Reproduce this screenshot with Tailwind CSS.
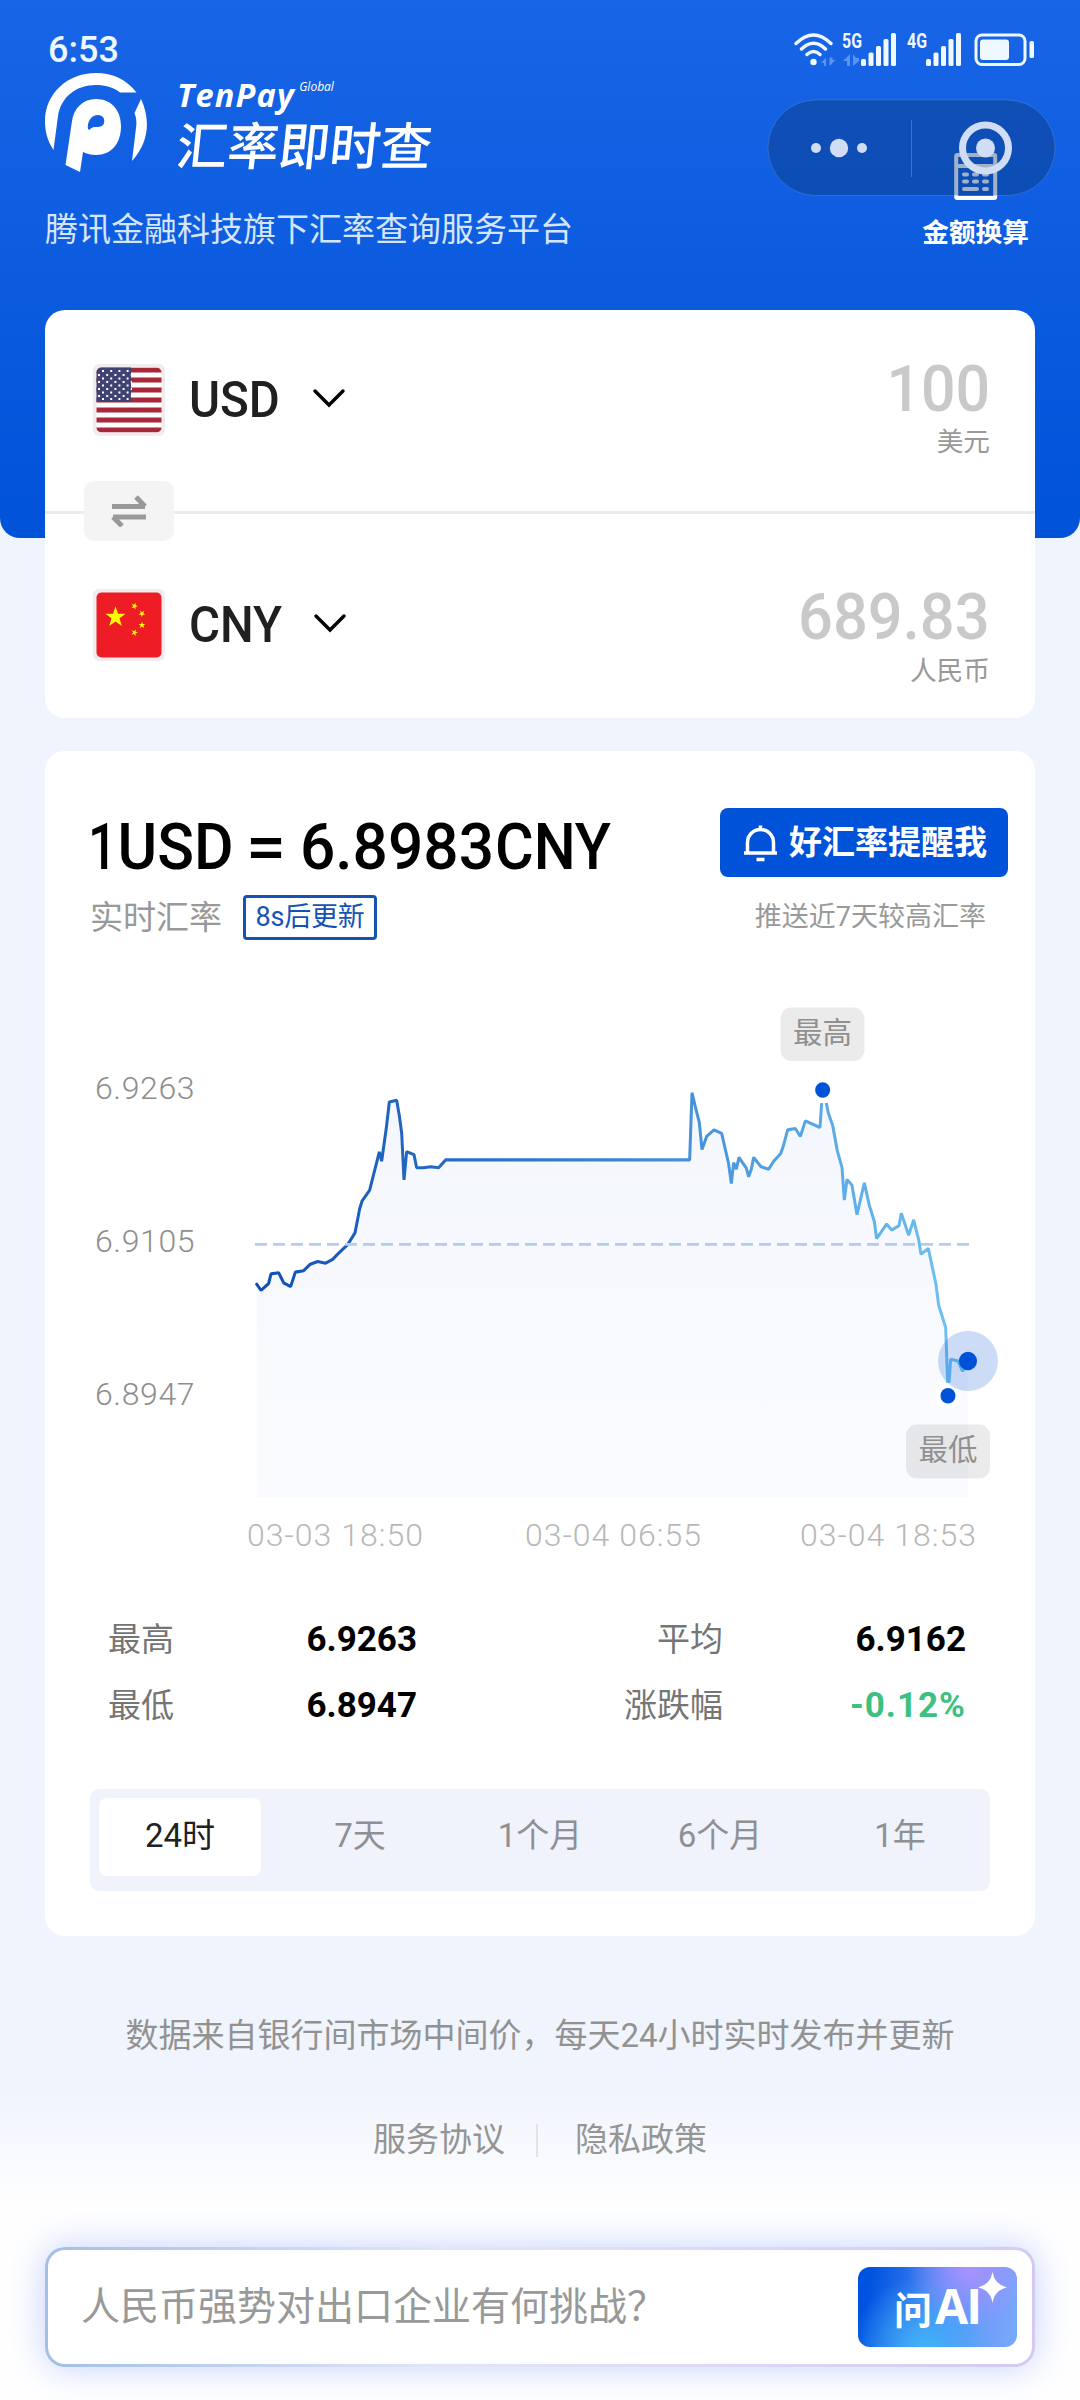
<!DOCTYPE html>
<html lang="zh-CN">

<head>
  <meta charset="UTF-8">
  <meta name="viewport" content="width=device-width, initial-scale=1.0">
  <title>汇率即时查</title>
  <script src="https://cdn.jsdelivr.net/npm/@tailwindcss/browser@4"></script>
</head>

<body class="bg-[#f0f4fc] font-['Roboto','Noto_Sans_CJK_SC',sans-serif] text-black">
  <div class="relative w-[1080px] h-[2400px] overflow-hidden">

    <header class="relative h-[538px] rounded-b-[20px] bg-linear-to-b from-[#1865e6] to-[#0052d9] text-white">
      <!-- status bar -->
      <div class="flex justify-between h-[70px] pt-[33px] pl-[48px] pr-[43px] text-[#eff7ff]">
        <span class="text-[36px] leading-[34px] font-medium">6:53</span>
        <div class="flex">
          <svg class="w-[46px] h-[34px]" viewBox="0 0 46 34" fill="none" stroke="currentColor" stroke-width="3.4" stroke-linecap="round">
            <path d="M3 10.500Q20.500-6.500 38 10.500M8.500 16Q20.500 4.500 32.500 16M14 21.500Q20.500 15.500 27 21.500" />
            <circle cx="20.500" cy="29" r="3.200" fill="currentColor" stroke="none" />
            <path d="M33 24.500v8.500h-2v-3h-3zM36.500 24.500v8.500l6-6h-3v-2.500z" fill="#5b93f0" stroke="none" />
          </svg>
          <svg class="w-[66px] h-[34px] overflow-visible" viewBox="0 0 66 34" fill="currentColor">
            <text x="3" y="15" font-size="21" font-weight="700" textLength="20" lengthAdjust="spacingAndGlyphs">5G</text>
            <path d="M11 21v12h-3v-5h-4zM14 21v12l6-5v-3h-3z" fill="#5b93f0" />
            <rect x="22" y="26" width="5" height="7" rx="1.500" />
            <rect x="29.500" y="19.500" width="5" height="13.500" rx="1.500" />
            <rect x="37" y="13" width="5" height="20" rx="1.500" />
            <rect x="44.500" y="6" width="5" height="27" rx="1.500" />
            <rect x="52" y="0" width="5" height="33" rx="1.500" />
          </svg>
          <svg class="w-[66px] h-[34px] overflow-visible" viewBox="0 0 66 34" fill="currentColor">
            <text x="2" y="15" font-size="21" font-weight="700" textLength="20" lengthAdjust="spacingAndGlyphs">4G</text>
            <rect x="21" y="26" width="5" height="7" rx="1.500" />
            <rect x="28.500" y="19.500" width="5" height="13.500" rx="1.500" />
            <rect x="36" y="13" width="5" height="20" rx="1.500" />
            <rect x="43.500" y="6" width="5" height="27" rx="1.500" />
            <rect x="51" y="0" width="5" height="33" rx="1.500" />
          </svg>
          <svg class="w-[66px] h-[34px]" viewBox="0 0 66 34" fill="currentColor">
            <rect x="5" y="2" width="49" height="29.500" rx="6" fill="none" stroke="currentColor" stroke-width="3" />
            <rect x="9" y="6.500" width="29" height="20.500" rx="3" />
            <rect x="58.500" y="8" width="4.500" height="17" rx="1.500" />
          </svg>
        </div>
      </div>

      <!-- brand -->
      <div class="flex pl-[45px] pt-[3px]">
        <svg class="w-[104px] h-[100px]" viewBox="0 0 104 100" fill="#fff">
          <path d="M8.500 77C2 67 0 58 0 48C0 21 22 0 51 0C68 0 82 7 91.500 19.500H75C68 14 60 12 51 12C31 12 16 24 13 43Z" />
          <path d="M96 26C105 45 105 68 87 88L91 55C92 48 91 44 89.500 40Z" />
          <path fill-rule="evenodd" d="M20.500 92L27 48C29 35 38 26 51 26C66 26 76 37 76 53C76 71 66 82 51 82C46 82 42 81 38 79L35 99ZM43 56C42 49 46 42 53 42C58 42 60 46 59 50C58 54 54 54 50 54C47 54 45 56 44.500 57Z" />
        </svg>
        <div class="pl-[28px] pt-[2px]">
          <div class="flex items-start font-['Open_Sans',sans-serif] italic">
            <span class="text-[32.5px] leading-[40px] font-bold tracking-[1.2px]">TenPay</span>
            <span class="pl-[4px] pt-[4px] text-[12px] leading-[16px]">Global</span>
          </div>
          <div class="-skew-x-6 pt-[4px] text-[51px] leading-[58px] font-medium">汇率即时查</div>
        </div>
      </div>
      <p class="pl-[45px] pt-[31px] text-[33px] leading-[44px] text-[#d5e5fd]">腾讯金融科技旗下汇率查询服务平台</p>

      <!-- amount converter entry -->
      <div class="absolute right-[51px] top-[152px] flex flex-col items-center">
        <svg class="w-[44px] h-[49px]" viewBox="0 0 44 49" fill="none" stroke="#fff" stroke-width="4">
          <rect x="2.200" y="3" width="39" height="43" rx="1" />
          <path d="M2 14h39" />
          <path d="M10 22.500h3M20 22.500h3M30 22.500h3M10 29.500h3M20 29.500h3M30 29.500h3M10 37h13M30 37h3" stroke-linecap="round" />
        </svg>
        <span class="mt-[14px] text-[26.7px] leading-[36px] font-bold">金额换算</span>
      </div>

      <!-- mini program capsule -->
      <svg class="absolute left-[767px] top-[99px] w-[289px] h-[98px]" viewBox="0 0 289 98">
        <rect x="1" y="1" width="287" height="95.500" rx="47.700" fill="#09326f" fill-opacity=".38" stroke="#fff" stroke-opacity=".14" />
        <path d="M144.500 21v57" stroke="#fff" stroke-opacity=".2" />
        <g fill="#d0ddf5">
          <circle cx="49" cy="49" r="5" />
          <circle cx="72" cy="49" r="9.200" />
          <circle cx="95" cy="49" r="5" />
          <circle cx="218.500" cy="49" r="9.500" />
        </g>
        <circle cx="218.500" cy="49" r="23" fill="none" stroke="#d0ddf5" stroke-width="7" />
      </svg>
    </header>

    <main class="relative -mt-[228px] px-[45px]">
      <!-- converter -->
      <section class="relative h-[408px] rounded-[20px] bg-white">
        <div class="flex justify-between h-[201px] pl-[48px] pr-[45px]">
          <div class="flex items-center h-[126px] pt-[27px]">
            <svg class="w-[72px] h-[72px] mt-[27px]" viewBox="0 0 72 72">
              <rect width="72" height="72" rx="6" fill="#f1ecee" />
              <clipPath id="flag">
                <rect x="3.500" y="3.500" width="65" height="65" rx="5" />
              </clipPath>
              <g clip-path="url(#flag)">
                <rect width="72" height="72" fill="#fff" />
                <path d="M0 6h72M0 16h72M0 26h72M0 36h72M0 46h72M0 56h72M0 66h72" stroke="#a72839" stroke-width="5" />
                <rect width="38" height="38" fill="#3f4272" />
                <path d="M9 7h30M5 11h34M9 14.500h30M5 18h34M9 21.500h30M5 25h34M9 28.500h30M5 32h34M9 35h30" stroke="#fff" stroke-width="2" stroke-dasharray="2 6.200" />
              </g>
            </svg>
            <span class="w-[88px] ml-[24px] mt-[27px] text-[50px] font-medium origin-left scale-x-[0.95] text-[#202020]">USD</span>
            <svg class="w-[34px] h-[22px] ml-[35px] mt-[22px]" viewBox="0 0 34 22" fill="none" stroke="#000" stroke-width="3.400" stroke-linecap="round">
              <path d="M3 4l14 14L31 4" />
            </svg>
          </div>
          <div class="pt-[45px] text-right">
            <div class="text-[64px] leading-[70px] font-medium origin-right scale-x-95 text-[#c9c9c9]">100</div>
            <div class="-mt-[3px] text-[26.7px] leading-[40px] text-[#999]">美元</div>
          </div>
        </div>
        <div class="h-[3px] bg-[#ebebeb]"></div>
        <div class="flex justify-between h-[204px] pl-[48px] pr-[45px]">
          <div class="flex items-center h-[174px] pt-[24px]">
            <svg class="w-[72px] h-[72px] mt-[24px]" viewBox="0 0 72 72">
              <rect width="72" height="72" rx="6" fill="#f1ecee" />
              <rect x="3.500" y="3.500" width="65" height="65" rx="5" fill="#ee1c25" />
              <g fill="#ff0">
                <path id="star" d="M22.500 17.500L25 24.800H32.700L26.500 29.300L28.800 37L22.500 32.500L16.200 37L18.500 29.300L12.300 24.800H20Z" />
                <use href="#star" transform="translate(41.500 17) rotate(20) scale(.33) translate(-22.500 -28)" />
                <use href="#star" transform="translate(49 24.500) rotate(40) scale(.33) translate(-22.500 -28)" />
                <use href="#star" transform="translate(49 36) scale(.33) translate(-22.500 -28)" />
                <use href="#star" transform="translate(41.500 43.500) rotate(20) scale(.33) translate(-22.500 -28)" />
              </g>
            </svg>
            <span class="w-[90px] ml-[24px] mt-[24px] text-[50px] font-medium origin-left scale-x-[0.95] text-[#202020]">CNY</span>
            <svg class="w-[34px] h-[22px] ml-[34px] mt-[19px]" viewBox="0 0 34 22" fill="none" stroke="#000" stroke-width="3.400" stroke-linecap="round">
              <path d="M3 4l14 14L31 4" />
            </svg>
          </div>
          <div class="pt-[69px] text-right">
            <div class="text-[64px] leading-[70px] font-medium origin-right scale-x-[0.96] text-[#c9c9c9]">689.83</div>
            <div class="-mt-[2px] text-[26.7px] leading-[40px] text-[#999]">人民币</div>
          </div>
        </div>
        <button class="absolute left-[39px] top-[171px] w-[90px] h-[60px] rounded-[10px] bg-[#f4f4f4]">
          <svg class="w-[36px] h-[32px] mx-auto" viewBox="0 0 36 32" fill="none" stroke="#999" stroke-width="5">
            <path d="M1 11.500H34M25 2L34 11.500M35 22H2M11 31L2 22" />
          </svg>
        </button>
      </section>

      <!-- rate details -->
      <section class="mt-[33px] h-[1185px] rounded-[20px] bg-white px-[45px] pt-[57px]">
        <div class="flex justify-between h-[132px]">
          <div>
            <h1>
              <svg class="w-[530px] h-[78px] overflow-visible" viewBox="0 0 530 78" font-size="64.500" font-weight="500">
                <text x="-2" y="61" textLength="29" lengthAdjust="spacingAndGlyphs">1</text>
                <text x="27.500" y="61" textLength="116" lengthAdjust="spacingAndGlyphs">USD</text>
                <text x="156" y="61" textLength="40" lengthAdjust="spacingAndGlyphs">=</text>
                <text x="210" y="61" textLength="194" lengthAdjust="spacingAndGlyphs">6.8983</text>
                <text x="405" y="61" textLength="116" lengthAdjust="spacingAndGlyphs">CNY</text>
              </svg>
            </h1>
            <div class="flex items-center mt-[9px] text-[33px] leading-[45px] text-[#999]">
              <span>实时汇率</span>
              <span class="w-[134px] h-[45px] ml-[21px] border-3 border-[#1453b4] rounded-[4px] text-center text-[27px] leading-[39px] tracking-[-0.2px] text-[#1453b4]">8s后更新</span>
            </div>
          </div>
          <div class="-mr-[18px]">
            <button class="flex items-center w-[288px] h-[69px] pl-[23px] rounded-[8px] bg-[#0052d9] text-white">
              <svg class="w-[36px] h-[40px]" viewBox="0 0 36 40" fill="none" stroke="#fff" stroke-width="3.500">
                <path d="M1 30H34M4.500 30V19.500A13 13 0 0 1 30.500 19.500V30M17.500 2.500V7M13.500 36.500H21.500" />
              </svg>
              <span class="pl-[10px] text-[33px] leading-[44px] font-bold">好汇率提醒我</span>
            </button>
            <p class="mt-[21px] pr-[22px] text-right text-[27px] leading-[38px] text-[#999]">推送近7天较高汇率</p>
          </div>
        </div>

        <svg class="-ml-[30px] mt-[60px] w-[960px] h-[560px]" viewBox="60 1000 960 560">
          <defs>
            <linearGradient id="line" gradientUnits="userSpaceOnUse" x1="588" y1="0" x2="2724" y2="0">
              <stop offset="0" stop-color="#0f4fb5" />
              <stop offset=".5" stop-color="#3a83d2" />
              <stop offset="1" stop-color="#70c4f2" />
            </linearGradient>
            <linearGradient id="area" x1="0" y1="0" x2="0" y2="1">
              <stop offset="0" stop-color="#f4f7fd" />
              <stop offset="1" stop-color="#fafbfe" />
            </linearGradient>
          </defs>
          <g transform="translate(60 1040) scale(.33333 .34439)">
            <path fill="url(#area)" d="M590 706L603 727L626 707L633 679L656 676L671 705L692 716L706 674L731 670L751 651L773 643L797 648L818 637L836 619L863 594L885 560L899 490L906 468L929 436L958 325L965 352L979 255L988 180L1010 175L1018 220L1025 270L1032 406L1040 324L1062 333L1070 371L1136 371L1157 348L1889 348L1896 153L1905 190L1918 240L1926 318L1940 280L1962 261L1985 271L2006 360L2014 417L2021 356L2029 375L2037 341L2059 372L2066 397L2074 375L2081 341L2103 368L2126 375L2141 352L2162 330L2170 308L2183 261L2206 257L2221 280L2236 235L2280 254L2288 145L2305 212L2318 248L2332 322L2346 370L2353 465L2361 405L2376 422L2391 507L2413 415L2428 480L2443 527L2450 577L2480 534L2495 552L2517 539L2524 503L2546 567L2561 522L2576 580L2583 622L2605 605L2628 710L2636 770L2657 835L2664 1033L2672 927L2694 932L2708 962L2723 932V1328H590Z" />
            <path fill="none" stroke="url(#line)" stroke-width="9" stroke-linejoin="bevel" d="M588 706L603 727L626 707L633 679L656 676L671 705L692 716L706 674L731 670L751 651L773 643L797 648L818 637L836 619L863 594L885 560L899 490L906 468L929 436L958 325L965 352L979 255L988 180L1010 175L1018 220L1025 270L1032 406L1040 324L1062 333L1070 371L1090 371L1112 368L1136 371L1157 348L1889 348L1896 153L1905 190L1918 240L1926 318L1940 280L1962 261L1985 271L2006 360L2014 417L2021 356L2029 375L2037 341L2059 372L2066 397L2074 375L2081 341L2103 368L2126 375L2141 352L2162 330L2170 308L2183 261L2206 257L2221 280L2236 235L2280 254L2285 183M2299 183L2305 212L2318 248L2332 322L2346 370L2353 465L2361 405L2376 422L2391 507L2413 415L2428 480L2443 527L2450 577L2480 534L2495 552L2517 539L2524 503L2546 567L2561 522L2576 580L2583 622L2605 605L2628 710L2636 770L2657 835L2663 994L2667 994L2672 927L2694 932L2708 962L2723 932" />
            <path d="M585 593.500H2728" stroke="#b3ccf2" stroke-width="8.500" stroke-dasharray="36 18" />
            <circle cx="2288" cy="145" r="38" fill="#fff" />
            <circle cx="2288" cy="145" r="22.500" fill="#0052d9" />
            <circle cx="2664" cy="1033" r="38" fill="#fff" />
            <circle cx="2664" cy="1033" r="22.500" fill="#0052d9" />
            <ellipse cx="2724" cy="932" rx="90" ry="87" fill="#0052d9" fill-opacity=".2" />
            <circle cx="2724" cy="932" r="27" fill="#0052d9" />
          </g>
          <rect x="780.500" y="1007.500" width="84" height="53.500" rx="11" fill="#000" fill-opacity=".08" />
          <rect x="906" y="1424.500" width="84" height="54" rx="11" fill="#000" fill-opacity=".08" />
          <g font-size="29.500" fill="#909090" text-anchor="middle">
            <text x="822.500" y="1042.500">最高</text>
            <text x="948" y="1460">最低</text>
          </g>
          <g font-size="32" fill="#8e8e8e" font-weight="300">
            <text x="95" y="1098.500" textLength="99.500">6.9263</text>
            <text x="95" y="1251.500" textLength="99.500">6.9105</text>
            <text x="95" y="1404.500" textLength="99.500">6.8947</text>
          </g>
          <g font-size="32" fill="#b8b8b8" font-weight="300">
            <text x="247" y="1545.500" textLength="176">03-03 18:50</text>
            <text x="525" y="1545.500" textLength="176">03-04 06:55</text>
            <text x="800" y="1545.500" textLength="176">03-04 18:53</text>
          </g>
        </svg>

        <div class="grid grid-cols-[179px_130px_306px_243px] pl-[18px] mt-[47px] text-[33px] leading-[66px] text-[#757575]">
          <span>最高</span>
          <span class="text-right text-[35px] font-bold text-black">6.9263</span>
          <span class="text-right">平均</span>
          <span class="text-right text-[35px] font-bold text-black">6.9162</span>
          <span>最低</span>
          <span class="text-right text-[35px] font-bold text-black">6.8947</span>
          <span class="text-right">涨跌幅</span>
          <span class="text-right text-[35px] font-bold tracking-[1px] text-[#3dc080]">-0.12%</span>
        </div>

        <div class="grid grid-cols-5 mt-[50px] h-[102px] rounded-[9px] bg-[#f0f3fb] text-center text-[33px] leading-[78px] text-[#8e9094]">
          <span class="w-[162px] h-[78px] mx-auto mt-[9px] rounded-[8px] bg-white leading-[76px] text-[#202020]">24时</span>
          <span class="pt-[8px]">7天</span>
          <span class="pt-[8px]">1个月</span>
          <span class="pt-[8px]">6个月</span>
          <span class="pt-[8px]">1年</span>
        </div>
      </section>
    </main>

    <footer class="h-[465px] pt-[78px] bg-linear-to-b from-[#f0f4fc] from-[33%] to-[#fefeff] to-[58%] text-center text-[33px] leading-[44px] text-[#929292]">
      <p>数据来自银行间市场中间价，每天24小时实时发布并更新</p>
      <div class="flex justify-center items-center mt-[60px] text-[#959595]">
        <a>服务协议</a>
        <span class="w-[2px] h-[33px] ml-[31px] mr-[37px] bg-[#e3e3e6]"></span>
        <a>隐私政策</a>
      </div>
      <div class="mx-[45px] mt-[85px] h-[120px] rounded-[20px] p-[3px] bg-linear-to-r from-[#a3bfe6] via-[#e2e6f8] via-40% to-[#d4c9f2] shadow-[0_0_36px_#c6d3fb]">
        <div class="flex items-center justify-between h-full rounded-[17px] bg-white pl-[33px] pr-[15px]">
          <span class="text-[39px] text-[#999]">人民币强势对出口企业有何挑战？</span>
          <button class="relative w-[159px] h-[80px] rounded-[12px] bg-[radial-gradient(circle_at_70%_0%,#ab93ff_0%,transparent_45%),radial-gradient(circle_at_42%_105%,#42b4f8_0%,transparent_60%),linear-gradient(100deg,#0052e0_8%,#3f83f2_45%,#739cfb_80%,#76abf8)] text-white">
            <span class="flex items-baseline pl-[36px] leading-[78px]">
              <span class="text-[38px] font-bold">问</span>
              <span class="pl-[3px] text-[48px] tracking-[-2px] font-['Open_Sans',sans-serif] font-bold">AI</span>
            </span>
            <svg class="absolute right-[10px] top-[5px] w-[29px] h-[31px]" viewBox="0 0 29 31" fill="#fff">
              <path d="M14.500 0Q16.500 12.500 29 15.500Q16.500 18 14.500 31Q12.500 18 0 15.500Q12.500 12.500 14.500 0Z" />
            </svg>
          </button>
        </div>
      </div>
    </footer>
  </div>
</body>

</html>
